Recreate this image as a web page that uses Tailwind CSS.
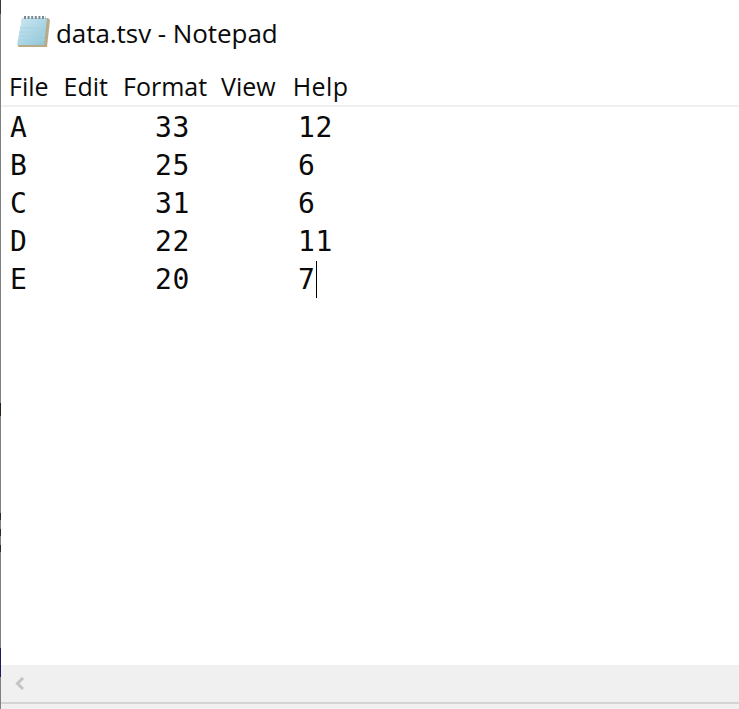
<!DOCTYPE html>
<html><head><meta charset="utf-8"><script src="https://cdn.jsdelivr.net/npm/@tailwindcss/browser@4"></script></head>
<body class="m-0 bg-white">
<div class="flex h-[709px] w-[739px] overflow-hidden bg-white text-[#0a0a0a]">
  <div class="flex h-full w-px shrink-0 flex-col bg-[#808080]">
    <div class="h-[14px] bg-[#3a3a3a]"></div>
    <div class="mt-[389px] h-[13px] bg-[#2b2018]"></div>
    <div class="mt-[97px] h-[7px] bg-[#2a2a2a]"></div>
    <div class="mt-[9px] h-[7px] bg-[#2a2a2a]"></div>
    <div class="mt-[9px] h-[7px] bg-[#2a2a2a]"></div>
    <div class="mt-[96px] h-[29px] bg-[#1c1c5c]"></div>
  </div>
  <div class="flex min-w-0 flex-1 flex-col">
    <div class="flex h-[66px] items-center pl-[14px]">
      <svg class="mt-[-3px] h-[36px] w-[36px]" viewBox="0 0 36 36">
        <defs><linearGradient id="g" x1="0" y1="0" x2="1" y2="1"><stop offset="0" stop-color="#cfe9f2"/><stop offset="1" stop-color="#8cc4d8"/></linearGradient></defs>
        <path d="M7 4 L33 4 L35 6 L32 33 L3 33 Z" fill="#b8aa88"/>
        <path d="M7 4 L32 4 L29 31 L2 31 Z" fill="url(#g)"/>
        <path d="M5 14 L31 14 M4.500 18 L30.500 18 M4 22 L30 22 M3.500 26 L29.500 26" stroke="#a6d2e0" stroke-width="1"/>
        <path d="M9 3.500 H31" stroke="#7b8a92" stroke-width="3" stroke-dasharray="2 1.600"/>
      </svg>
      <span class="ml-[5px] whitespace-nowrap font-['Open_Sans',sans-serif] text-[26px] leading-none tracking-[-0.06px]">data.tsv - Notepad</span>
    </div>
    <div class="flex h-[41px] items-center gap-[15px] border-b-2 border-[#f0f0f0] pl-[8px] pt-[1px] font-['Open_Sans',sans-serif] text-[25px] leading-none">
      <span>File</span><span>Edit</span><span>Format</span><span class="ml-[-1px]">View</span><span class="ml-[2px] tracking-[0.4px]">Help</span>
    </div>
    <div class="flex-1 pl-[9px] pt-[2px] font-['DejaVu_Sans_Mono',monospace] text-[28px] tracking-[0.7px] leading-[38px]">
      <div class="grid grid-cols-[145px_143px_1fr]"><span>A</span><span>33</span><span>12</span></div>
      <div class="grid grid-cols-[145px_143px_1fr]"><span>B</span><span>25</span><span>6</span></div>
      <div class="grid grid-cols-[145px_143px_1fr]"><span>C</span><span>31</span><span>6</span></div>
      <div class="grid grid-cols-[145px_143px_1fr]"><span>D</span><span>22</span><span>11</span></div>
      <div class="grid grid-cols-[145px_143px_1fr]"><span>E</span><span>20</span><span class="flex items-start"><span>7</span><span class="h-[37px] w-px bg-black"></span></span></div>
    </div>
    <div class="box-content flex h-[37px] shrink-0 items-center border-b-2 border-[#d4d4d4] bg-[#f0f0f0] pl-[14px]">
      <svg class="h-[13px] w-[10px]" viewBox="0 0 10 13"><path d="M8 1 L2.500 6.500 L8 12" fill="none" stroke="#c4c4c4" stroke-width="3"/></svg>
    </div>
    <div class="h-[5px] shrink-0 bg-[#f0f0f0]"></div>
  </div>
</div>
</body></html>
